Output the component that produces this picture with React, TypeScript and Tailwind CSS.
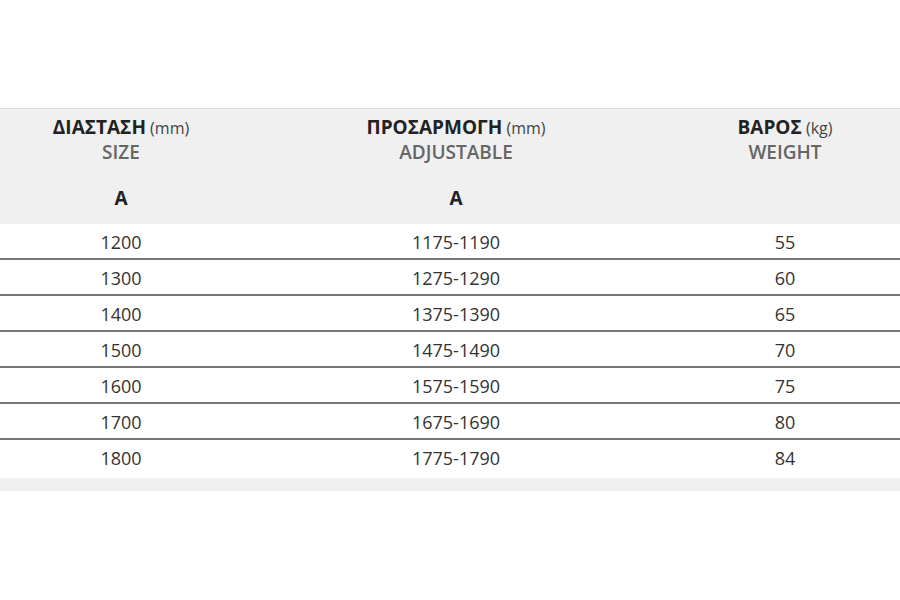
import React from "react";

const rows = [
  ["1200", "1175-1190", "55"],
  ["1300", "1275-1290", "60"],
  ["1400", "1375-1390", "65"],
  ["1500", "1475-1490", "70"],
  ["1600", "1575-1590", "75"],
  ["1700", "1675-1690", "80"],
  ["1800", "1775-1790", "84"],
];

function Head({ gr, unit, en, a }: { gr: string; unit: string; en: string; a?: boolean }) {
  return (
    <div className="flex flex-col items-center pt-[6px]">
      <div className="leading-[24px] whitespace-nowrap">
        <span className="text-[19px] font-bold text-[#222]">{gr}</span>
        <span className="text-[16px] text-[#444]"> {unit}</span>
      </div>
      <div className="leading-[24px] text-[19px] font-semibold text-[#666]">{en}</div>
      {a ? (
        <div className="mt-[22px] leading-[24px] text-[19px] font-bold text-[#222]">A</div>
      ) : null}
    </div>
  );
}

export default function App() {
  return (
    <div
      className="w-[900px] h-[600px] bg-white pt-[108px]"
      style={{ fontFamily: '"Open Sans", "Noto Sans", sans-serif' }}
    >
      <div className="grid grid-cols-[242px_428px_1fr] h-[116px] bg-[#f0f0f0] border-t border-[#dcdcdc]">
        <Head gr="ΔΙΑΣΤΑΣΗ" unit="(mm)" en="SIZE" a />
        <Head gr="ΠΡΟΣΑΡΜΟΓΗ" unit="(mm)" en="ADJUSTABLE" a />
        <Head gr="ΒΑΡΟΣ" unit="(kg)" en="WEIGHT" />
      </div>
      {rows.map((r, i) => (
        <div
          key={i}
          className={
            "grid grid-cols-[242px_428px_1fr] items-center text-[18px] text-[#333] " +
            (i < rows.length - 1 ? "h-[36px] pt-[3px] border-b-2 border-[#777]" : "h-[38px] pb-[2px]")
          }
        >
          <div className="text-center">{r[0]}</div>
          <div className="text-center">{r[1]}</div>
          <div className="text-center">{r[2]}</div>
        </div>
      ))}
      <div className="h-[13px] bg-[#f0f0f0]" />
    </div>
  );
}
